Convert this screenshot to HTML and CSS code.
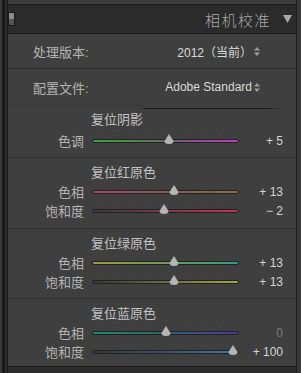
FILE: index.html
```html
<!DOCTYPE html>
<html lang="zh-CN">
<head>
    <meta charset="UTF-8">
    <meta name="viewport" content="width=device-width, initial-scale=1.0">
    <title>相机校准</title>
    <link rel="stylesheet" href="styles.css">
</head>
<body>
    <div class="app">
        <div class="top-strip"></div>

        <div class="panel-header">
            <span class="toggle"></span>
            <span class="panel-title">相机校准</span>
            <svg class="collapse" width="9" height="8" viewBox="0 0 9 8"><path d="M0 0H9L4.5 8Z" fill="#a9a9a9"/></svg>
        </div>

        <div class="panel">
            <div class="field-row first-row">
                <span class="field-label">处理版本:</span>
                <span class="field-value">2012（当前）</span>
                <svg class="stepper" width="6" height="9" viewBox="0 0 6 9"><path d="M0 3.5L3 0L6 3.5Z M0 5.5L3 9L6 5.5Z" fill="#9c9c9c"/></svg>
            </div>
            <div class="field-row">
                <span class="field-label">配置文件:</span>
                <span class="field-value">Adobe Standard</span>
                <svg class="stepper" width="6" height="9" viewBox="0 0 6 9"><path d="M0 3.5L3 0L6 3.5Z M0 5.5L3 9L6 5.5Z" fill="#9c9c9c"/></svg>
            </div>
            <div class="divider"></div>

            <!-- shadows -->
            <div class="section shadows">
                <div class="section-title">复位阴影</div>
                <div class="slider-row">
                    <span class="slider-label">色调</span>
                    <div class="track tint"><svg class="thumb" style="--p: 0.525" viewBox="0 0 10 10"><path d="M5 0L9.5 7Q9.5 10 5 10Q0.5 10 0.5 7Z"/></svg></div>
                    <span class="slider-value">+ 5</span>
                </div>
            </div>

            <!-- red primary -->
            <div class="section">
                <div class="section-title">复位红原色</div>
                <div class="slider-row">
                    <span class="slider-label">色相</span>
                    <div class="track red-hue"><svg class="thumb" style="--p: 0.565" viewBox="0 0 10 10"><path d="M5 0L9.5 7Q9.5 10 5 10Q0.5 10 0.5 7Z"/></svg></div>
                    <span class="slider-value">+ 13</span>
                </div>
                <div class="slider-row">
                    <span class="slider-label">饱和度</span>
                    <div class="track red-sat"><svg class="thumb" style="--p: 0.49" viewBox="0 0 10 10"><path d="M5 0L9.5 7Q9.5 10 5 10Q0.5 10 0.5 7Z"/></svg></div>
                    <span class="slider-value">− 2</span>
                </div>
            </div>

            <!-- green primary -->
            <div class="section green">
                <div class="section-title">复位绿原色</div>
                <div class="slider-row">
                    <span class="slider-label">色相</span>
                    <div class="track green-hue"><svg class="thumb" style="--p: 0.565" viewBox="0 0 10 10"><path d="M5 0L9.5 7Q9.5 10 5 10Q0.5 10 0.5 7Z"/></svg></div>
                    <span class="slider-value">+ 13</span>
                </div>
                <div class="slider-row">
                    <span class="slider-label">饱和度</span>
                    <div class="track green-sat"><svg class="thumb" style="--p: 0.565" viewBox="0 0 10 10"><path d="M5 0L9.5 7Q9.5 10 5 10Q0.5 10 0.5 7Z"/></svg></div>
                    <span class="slider-value">+ 13</span>
                </div>
            </div>

            <!-- blue primary -->
            <div class="section blue">
                <div class="section-title">复位蓝原色</div>
                <div class="slider-row">
                    <span class="slider-label">色相</span>
                    <div class="track blue-hue"><svg class="thumb" style="--p: 0.5" viewBox="0 0 10 10"><path d="M5 0L9.5 7Q9.5 10 5 10Q0.5 10 0.5 7Z"/></svg></div>
                    <span class="slider-value zero">0</span>
                </div>
                <div class="slider-row">
                    <span class="slider-label">饱和度</span>
                    <div class="track blue-sat"><svg class="thumb" style="--p: 1" viewBox="0 0 10 10"><path d="M5 0L9.5 7Q9.5 10 5 10Q0.5 10 0.5 7Z"/></svg></div>
                    <span class="slider-value">+ 100</span>
                </div>
            </div>
        </div>

        <div class="bottom-strip"></div>
    </div>
</body>
</html>
```

FILE: styles.css
```css
body {
    margin: 0;
    background-color: #393939;
    font-family: "Liberation Sans", "Noto Sans CJK SC", sans-serif;
}
.app {
    width: 301px;
    height: 373px;
    box-sizing: border-box;
    padding: 0 4px 0 7px;
    display: flex;
    flex-direction: column;
    overflow: hidden;
    background: linear-gradient(to right, #393939 0 2px, #1b1b1b 2px 5px, #2d2d2d 5px 7px, #393939 7px);
}
.top-strip {
    height: 4px;
    background-color: #3d3d3d;
    border: 1px solid #1c1c1c;
    border-top: none;
}
.panel-header {
    height: 28px;
    display: flex;
    align-items: center;
    background-color: #2b2b2b;
    border-left: 1px solid #1c1c1c;
    border-right: 1px solid #1c1c1c;
    padding-right: 4px;
}
.toggle {
    width: 7px;
    height: 14px;
    box-sizing: border-box;
    border: 1px solid #1a1a1a;
    background: linear-gradient(#8c8c8c 0 50%, #555 50%);
}
.panel-title {
    margin-left: auto;
    margin-right: 12px;
    font-size: 15px;
    font-weight: 300;
    color: #a9a9a9;
    letter-spacing: 1.5px;
}
.collapse {
    display: block;
}
.panel {
    height: 334px;
    box-sizing: border-box;
    border: 1px solid #1c1c1c;
    background-color: #3f3f3f;
}
.field-row {
    height: 36px;
    display: flex;
    align-items: center;
    padding: 0 36px 0 25px;
}
.first-row {
    height: 34px;
    border-bottom: 1px solid #2e2e2e;
}
.field-label {
    font-size: 13px;
    color: #b4b4b4;
    flex: 1;
}
.field-value {
    font-size: 12px;
    color: #dadada;
}
.stepper {
    display: block;
    margin-left: 2px;
    margin-top: 1px;
}
.divider {
    height: 4px;
    background:
        linear-gradient(#363636, #363636) 0 0 / 135px 1px no-repeat,
        linear-gradient(to right, #1a1a1a 85%, rgba(26, 26, 26, 0)) 135px 3px / 142px 1px no-repeat;
}
.section {
    height: 71px;
    box-sizing: border-box;
    border-top: 1px solid #333;
    padding-top: 6px;
}
.section.shadows {
    height: 48px;
    border-top: none;
    padding-top: 2px;
}
.section.shadows .slider-row {
    margin-top: 2px;
}
.section.green {
    height: 70px;
}
.section.blue {
    height: 68px;
}
.section-title {
    height: 18px;
    line-height: 18px;
    padding-left: 83px;
    font-size: 13px;
    color: #c2c2c2;
}
.slider-row {
    height: 19px;
    display: grid;
    grid-template-columns: 76px 147px 1fr;
    column-gap: 8px;
    align-items: center;
    padding-right: 13px;
}
.slider-label {
    text-align: right;
    font-size: 13px;
    color: #b4b4b4;
}
.slider-value {
    text-align: right;
    font-size: 12px;
    color: #d4d4d4;
}
.slider-value.zero {
    color: #7a7a7a;
}
.track {
    position: relative;
    height: 2px;
    border: 1px solid #222;
    border-radius: 2px;
}
.track::before {
    content: "";
    position: absolute;
    left: 4px;
    right: 4px;
    top: -5px;
    height: 1px;
    background-image: linear-gradient(to right, #555 1px, transparent 1px);
    background-size: 17.375px 1px;
}
.thumb {
    position: absolute;
    width: 10px;
    height: 10px;
    top: -6px;
    left: calc(5px + (100% - 10px) * var(--p));
    transform: translateX(-50%);
    fill: #b5b5b5;
}
.tint { background: linear-gradient(to right, #3fa043, #5c7a5a 40%, #7a5a7a 60%, #c03cc0); }
.red-hue { background: linear-gradient(to right, #a5446c, #8a5a5a 50%, #8f6c48); }
.red-sat { background: linear-gradient(to right, #3a3a3a, #7a3a4a 50%, #c8304e); }
.green-hue { background: linear-gradient(to right, #9d9d3e, #6f9a58 50%, #2f9e86); }
.green-sat { background: linear-gradient(to right, #363636, #6c6e42 50%, #a3a63c); }
.blue-hue { background: linear-gradient(to right, #1f8a6c, #30606e 50%, #4a3ca0); }
.blue-sat { background: linear-gradient(to right, #343434, #3c5270 50%, #4473b5); }
.bottom-strip {
    flex: 1;
    background-color: #2b2b2b;
    border-left: 1px solid #1c1c1c;
    border-right: 1px solid #1c1c1c;
}
```
